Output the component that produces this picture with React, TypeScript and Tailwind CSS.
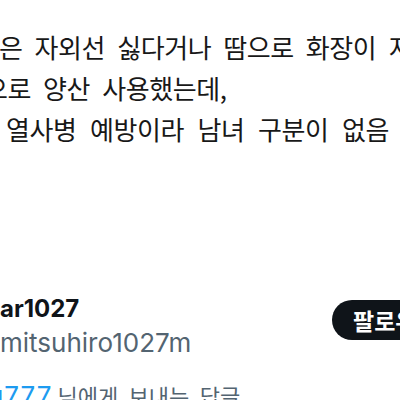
import React from "react";

export default function App() {
  return (
    <div className="w-[400px] h-[400px] overflow-hidden bg-white font-['Noto_Sans_CJK_KR',sans-serif]">
      <div className="pt-[26px] text-[26px] leading-[41px] tracking-[-0.4px] [word-spacing:6.6px] whitespace-nowrap text-[#181818]">
        <div className="ml-[-1px]">은 자외선 싫다거나 땀으로 화장이 지워지는</div>
        <div className="ml-[-16px]">으로 양산 사용했는데,</div>
        <div className="ml-[6px] [word-spacing:8px]">열사병 예방이라 남녀 구분이 없음 이</div>
      </div>

      <div className="mt-[143px] flex w-[430px] items-start">
        <div className="flex-1 leading-[34px] font-['Inter',sans-serif] whitespace-nowrap">
          <div className="text-[24px] font-bold text-[#0f1419]">ar1027</div>
          <div className="text-[26px] text-[#536471]">mitsuhiro1027m</div>
        </div>
        <button className="mt-[8px] h-[40px] w-[98px] shrink-0 rounded-full bg-[#0f1419] pl-[21px] text-left text-[23px] font-bold leading-[40px] text-white whitespace-nowrap">
          팔로우
        </button>
      </div>

      <div className="mt-[20px] ml-[-12px] whitespace-nowrap text-[22px] leading-[30px] text-[#536471]">
        <span className="font-['Inter',sans-serif] text-[26px] tracking-[1px] text-[#1d9bf0]">u777</span>{" "}
        <span className="[word-spacing:5.5px]">님에게 보내는 답글</span>
      </div>
    </div>
  );
}
